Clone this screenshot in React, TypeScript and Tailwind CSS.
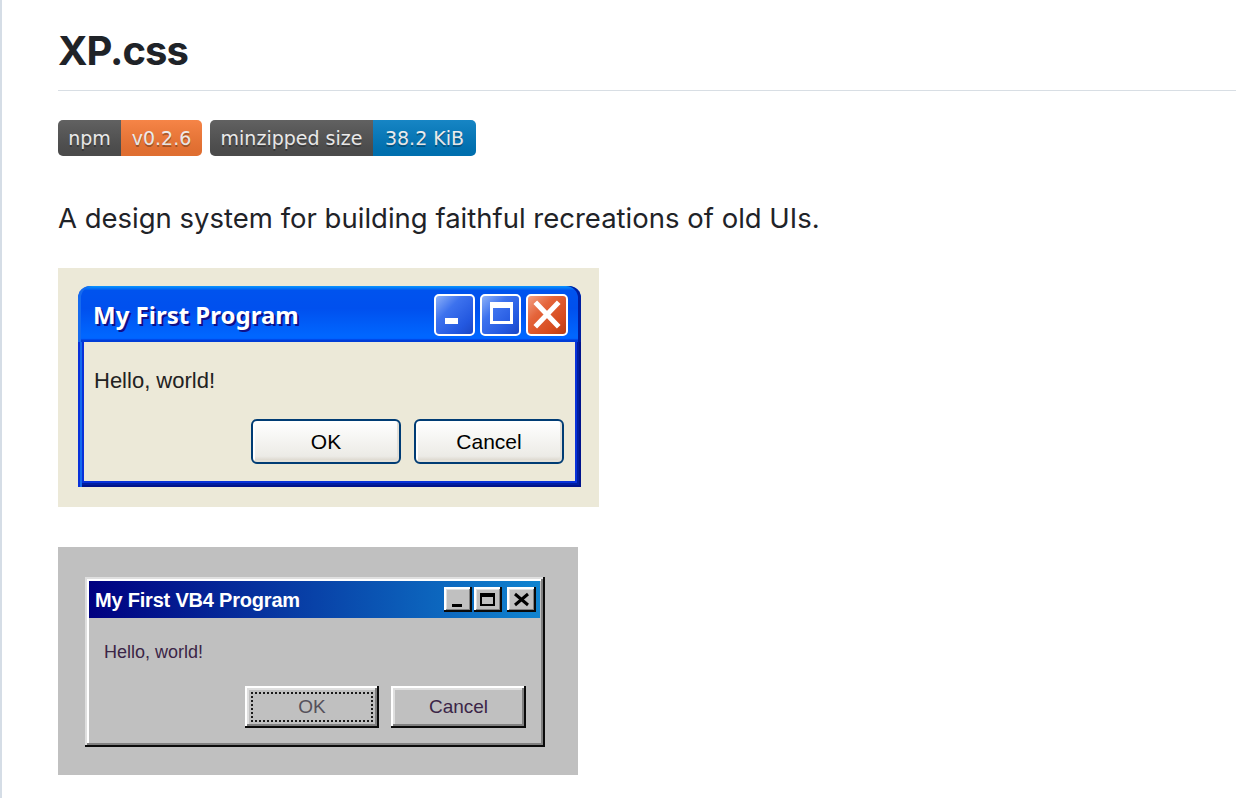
import React from "react";

function Badge({
  left,
  right,
  lw,
  rw,
  color,
}: {
  left: string;
  right: string;
  lw: string;
  rw: string;
  color: string;
}) {
  return (
    <div className="relative flex h-[36px] overflow-hidden rounded-[5px]">
      <span
        className={`flex ${lw} items-center justify-center bg-[#555555] [text-shadow:0_2px_0_rgba(1,1,1,0.3)]`}
      >
        {left}
      </span>
      <span
        className={`flex ${rw} items-center justify-center ${color} [text-shadow:0_2px_0_rgba(1,1,1,0.3)]`}
      >
        {right}
      </span>
      <span className="pointer-events-none absolute inset-0 bg-linear-to-b from-[rgba(187,187,187,0.12)] to-[rgba(0,0,0,0.12)]" />
    </div>
  );
}

function XpButton({ children }: { children: React.ReactNode }) {
  return (
    <div className="flex h-[45px] w-[150px] items-center justify-center rounded-[6px] border-2 border-[#003c74] bg-[linear-gradient(180deg,#ffffff,#ecebe6_86%,#d6d0c5)] font-['Liberation_Sans',sans-serif] text-[21px] text-black shadow-[inset_-2px_-2px_#e3e0d8,inset_2px_2px_#ffffff]">
      {children}
    </div>
  );
}

function XpWindow() {
  return (
    <div className="flex w-[503px] flex-col">
      <div className="flex h-[56px] items-center rounded-t-[12px] bg-[linear-gradient(180deg,#0997ff,#0053ee_8%,#0050ee_40%,#0066ff_88%,#0066ff_93%,#005bff_95%,#003dd7_96%,#003dd7)] pl-[15px] pr-[13px] shadow-[inset_3px_0_#166aee,inset_-3px_0_#001ea0]">
        <span className="pt-[2px] font-['Noto_Sans',sans-serif] text-[24px] font-bold leading-none text-white [text-shadow:2px_2px_0_#0f1089]">
          My First Program
        </span>
        <div className="ml-auto flex gap-[5px] pt-[1px]">
          <div className="h-[42px] w-[41px] rounded-[5px] border-2 border-white bg-[linear-gradient(135deg,#8db1f8_0%,#3d72ee_35%,#2358e0_75%,#1b47c4_100%)]">
            <svg width="37" height="38" viewBox="0 0 37 38">
              <rect x="9" y="22" width="13" height="6" fill="#fff" />
            </svg>
          </div>
          <div className="h-[42px] w-[41px] rounded-[5px] border-2 border-white bg-[linear-gradient(135deg,#8db1f8_0%,#3d72ee_35%,#2358e0_75%,#1b47c4_100%)]">
            <svg width="37" height="38" viewBox="0 0 37 38">
              <rect x="8" y="6" width="23" height="6" fill="#fff" />
              <rect x="8" y="6" width="3" height="22" fill="#fff" />
              <rect x="28" y="6" width="3" height="22" fill="#fff" />
              <rect x="8" y="25" width="23" height="3" fill="#fff" />
            </svg>
          </div>
          <div className="h-[42px] w-[42px] rounded-[5px] border-2 border-white bg-[linear-gradient(135deg,#f3a184_0%,#e4643a_35%,#d64b1e_75%,#b83d14_100%)]">
            <svg width="38" height="38" viewBox="0 0 38 38">
              <path
                d="M9 8 L29 29 M29 8 L9 29"
                stroke="#fff"
                strokeWidth="5"
                strokeLinecap="square"
              />
            </svg>
          </div>
        </div>
      </div>
      <div className="bg-[#0831d9] px-[6px] pb-[6px] shadow-[inset_2px_0_#0831d9,inset_4px_0_#166aee,inset_-2px_-2px_#00138c,inset_-4px_-4px_#001ea0]">
        <div className="flex flex-col bg-[#ece9d8] pb-[17px] pl-[10px] pr-[11px] pt-[27px]">
          <div className="font-['Liberation_Sans',sans-serif] text-[22px] leading-[24px] text-[#222222]">
            Hello, world!
          </div>
          <div className="mt-[26px] flex justify-end gap-[13px]">
            <XpButton>OK</XpButton>
            <XpButton>Cancel</XpButton>
          </div>
        </div>
      </div>
    </div>
  );
}

function W98TitleButton({
  w,
  children,
}: {
  w: string;
  children: React.ReactNode;
}) {
  return (
    <div
      className={`h-[25px] ${w} bg-[#c0c0c0] shadow-[inset_-2px_-2px_#0a0a0a,inset_2px_2px_#ffffff,inset_-3px_-3px_#808080,inset_3px_3px_#dfdfdf]`}
    >
      {children}
    </div>
  );
}

function W98Button({
  children,
  focused,
}: {
  children: React.ReactNode;
  focused?: boolean;
}) {
  return (
    <div
      className={`relative flex h-[42px] items-center justify-center bg-[#c0c0c0] font-['Liberation_Sans',sans-serif] text-[19px] text-[#3b2547] ${
        focused
          ? "w-[134px] shadow-[inset_-2px_-2px_#0a0a0a,inset_2px_2px_#ffffff,inset_-4px_-4px_#808080,inset_4px_4px_#dfdfdf]"
          : "w-[135px] shadow-[inset_-2px_-2px_#0a0a0a,inset_2px_2px_#ffffff,inset_-4px_-4px_#808080,inset_4px_4px_#dfdfdf]"
      }`}
    >
      {focused && (
        <span className="pointer-events-none absolute inset-x-[6px] inset-y-[6px] border-2 border-dotted border-[#1a1a1a]" />
      )}
      <span className={focused ? "text-[#55505a]" : ""}>{children}</span>
    </div>
  );
}

function Win98Window() {
  return (
    <div className="flex h-[170px] w-[460px] flex-col bg-[#c0c0c0] pb-[4px] pl-[4px] pr-[5px] pt-[4px] shadow-[inset_-2px_-2px_#0a0a0a,inset_2px_2px_#dfdfdf,inset_-4px_-4px_#808080,inset_4px_4px_#ffffff]">
      <div className="flex h-[37px] items-center bg-[linear-gradient(90deg,#000080,#1084d0)] pl-[6px] pr-[4px]">
        <span className="font-['Liberation_Sans',sans-serif] text-[20px] font-bold leading-none tracking-[-0.2px] text-white">
          My First VB4 Program
        </span>
        <div className="ml-auto flex">
          <W98TitleButton w="w-[28px]">
            <svg width="28" height="25" viewBox="0 0 28 25">
              <rect x="8" y="17" width="10" height="3" fill="#000" />
            </svg>
          </W98TitleButton>
          <div className="w-[2px]" />
          <W98TitleButton w="w-[28px]">
            <svg width="28" height="25" viewBox="0 0 28 25">
              <rect x="6" y="6" width="15" height="4" fill="#000" />
              <rect x="6" y="6" width="2" height="13" fill="#000" />
              <rect x="19" y="6" width="2" height="13" fill="#000" />
              <rect x="6" y="17" width="15" height="2" fill="#000" />
            </svg>
          </W98TitleButton>
          <div className="w-[5px]" />
          <W98TitleButton w="w-[29px]">
            <svg width="29" height="25" viewBox="0 0 29 25">
              <path
                d="M8 7 L21 18 M21 7 L8 18"
                stroke="#000"
                strokeWidth="3"
                strokeLinecap="butt"
              />
            </svg>
          </W98TitleButton>
        </div>
      </div>
      <div className="flex flex-col pl-[15px] pr-[14px] pt-[23px]">
        <div className="font-['Liberation_Sans',sans-serif] text-[18px] leading-[22px] text-[#3b2547]">
          Hello, world!
        </div>
        <div className="mt-[23px] flex justify-end gap-[12px]">
          <W98Button focused>OK</W98Button>
          <W98Button>Cancel</W98Button>
        </div>
      </div>
    </div>
  );
}

export default function App() {
  return (
    <div className="min-h-screen overflow-hidden border-l-2 border-[#d5dde6] bg-white">
      <div className="pl-[56px] pt-[27px]">
        <h1 className="border-b border-[#d8dee4] pb-[15px] font-['Inter',sans-serif] text-[40px] font-bold leading-[48px] tracking-[-1px] text-[#1f2328]">
          XP.css
        </h1>
        <div className="mt-[29px] flex gap-[8px] font-['DejaVu_Sans',sans-serif] text-[19px] text-white">
          <Badge
            left="npm"
            right="v0.2.6"
            lw="w-[63px]"
            rw="w-[81px]"
            color="bg-[#fe7d37]"
          />
          <Badge
            left="minzipped size"
            right="38.2 KiB"
            lw="w-[163px]"
            rw="w-[103px]"
            color="bg-[#007ec6]"
          />
        </div>
        <p className="mt-[42px] font-['Inter',sans-serif] text-[27.5px] leading-[40px] text-[#1f2328]">
          A design system for building faithful recreations of old UIs.
        </p>
        <div className="mt-[30px] h-[239px] w-[541px] bg-[#ece9d8] pl-[20px] pt-[18px]">
          <XpWindow />
        </div>
        <div className="mt-[40px] h-[228px] w-[520px] bg-[#c0c0c0] pl-[27px] pt-[30px]">
          <Win98Window />
        </div>
      </div>
    </div>
  );
}
